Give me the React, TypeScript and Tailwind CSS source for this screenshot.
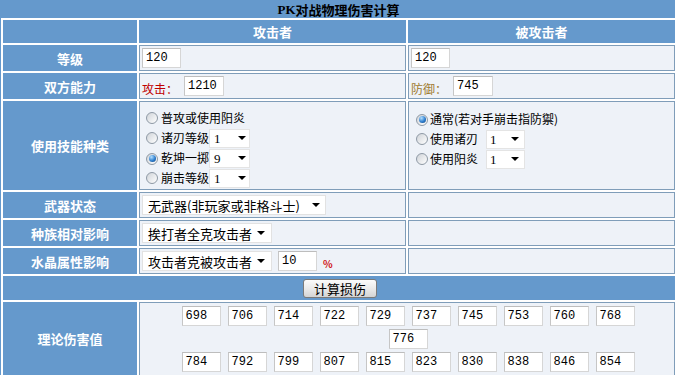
import React from "react";

const cjk = "font-['Noto_Sans_CJK_SC',sans-serif]";
const mono = "font-['Liberation_Mono',monospace]";

function Radio({ checked }: { checked?: boolean }) {
  return (
    <span className="inline-flex w-[12px] h-[12px] rounded-full border border-[#8e99a5] bg-[linear-gradient(135deg,#cfd3d8,#ffffff)] items-center justify-center shrink-0">
      {checked && (
        <span className="w-[7px] h-[7px] rounded-full bg-[radial-gradient(circle_at_35%_30%,#b4e0ff,#2f7fcf_55%,#0c3e78)]" />
      )}
    </span>
  );
}

function Arrow() {
  return (
    <span className="w-0 h-0 border-l-[4px] border-r-[4px] border-t-[4px] border-l-transparent border-r-transparent border-t-black" />
  );
}

function Box({ v, cls = "" }: { v: string; cls?: string }) {
  return (
    <div
      className={
        "h-[20px] bg-white border border-[#d6d6d6] border-t-[#bdbdbd] border-l-[#c6c6c6] pl-[3px] flex items-center text-[12px] text-black shrink-0 " +
        mono +
        " " +
        cls
      }
    >
      {v}
    </div>
  );
}

function Label({ children }: { children?: React.ReactNode }) {
  return (
    <div className="bg-[#6599cc] flex items-center justify-center text-white font-bold text-[13px]">
      {children}
    </div>
  );
}

function Cell({ children, cls = "" }: { children?: React.ReactNode; cls?: string }) {
  return (
    <div className={"bg-[#eef2f8] border border-[#7f9db9] px-[2px] flex items-center " + cls}>
      {children}
    </div>
  );
}

function SmallSel({ v, right }: { v: string; right?: boolean }) {
  return (
    <div
      className={
        (right ? "ml-[8px] w-[39px] pl-[3px] pr-[5px] " : "w-[41px] pl-[4px] pr-[3px] ") +
        "h-[19px] bg-white border border-[#e4e4e4] flex items-center justify-between text-[13px] text-black font-['Liberation_Serif',serif]"
      }
    >
      <span>{v}</span>
      <Arrow />
    </div>
  );
}

const line1 = ["698", "706", "714", "722", "729", "737", "745", "753", "760", "768"];
const line3 = ["784", "792", "799", "807", "815", "823", "830", "838", "846", "854"];

export default function App() {
  return (
    <div className={"w-[675px] h-[375px] overflow-hidden bg-[#6599cc] text-[12px] leading-none " + cjk}>
      <div className="h-[18px] flex items-center justify-center font-bold text-[13px] text-black pl-[2px]">
        <span className="font-['Liberation_Serif',serif]">PK</span>对战物理伤害计算
      </div>
      <div className="ml-[1px] w-[676px] bg-white p-[2px] grid grid-cols-[134px_267px_267px] gap-[2px] grid-rows-[23px_26px_26px_89px_26px_26px_26px_24px_80px]">
        {/* header */}
        <Label />
        <Label>攻击者</Label>
        <Label>被攻击者</Label>

        {/* 等级 */}
        <Label>等级</Label>
        <Cell>
          <Box v="120" cls="w-[39px]" />
        </Cell>
        <Cell>
          <Box v="120" cls="w-[39px]" />
        </Cell>

        {/* 双方能力 */}
        <Label>双方能力</Label>
        <Cell>
          <span className="text-[#c00000] text-[12px] mt-[6px]">攻击：</span>
          <Box v="1210" cls="w-[40px] ml-[6px]" />
        </Cell>
        <Cell>
          <span className="text-[#9e7b2f] text-[12px] mt-[6px]">防御：</span>
          <Box v="745" cls="w-[40px] ml-[6px]" />
        </Cell>

        {/* 使用技能种类 */}
        <Label>使用技能种类</Label>
        <div className="bg-[#eef2f8] border border-[#7f9db9] flex flex-col pt-[6px]">
          <div className="h-[20px] flex items-center">
            <span className="ml-[6px]">
              <Radio />
            </span>
            <span className="ml-[3px] text-black">普攻或使用阳炎</span>
          </div>
          <div className="h-[20px] flex items-center">
            <span className="ml-[6px]">
              <Radio />
            </span>
            <span className="ml-[3px] text-black">诸刃等级</span>
            <SmallSel v="1" />
          </div>
          <div className="h-[20px] flex items-center">
            <span className="ml-[6px]">
              <Radio checked />
            </span>
            <span className="ml-[3px] text-black">乾坤一掷</span>
            <SmallSel v="9" />
          </div>
          <div className="h-[20px] flex items-center">
            <span className="ml-[6px]">
              <Radio />
            </span>
            <span className="ml-[3px] text-black">崩击等级</span>
            <SmallSel v="1" />
          </div>
        </div>
        <div className="bg-[#eef2f8] border border-[#7f9db9] flex flex-col pt-[7px]">
          <div className="h-[20px] flex items-center">
            <span className="ml-[7px]">
              <Radio checked />
            </span>
            <span className="ml-[2px] text-black">通常(若对手崩击指防禦)</span>
          </div>
          <div className="h-[20px] flex items-center">
            <span className="ml-[7px]">
              <Radio />
            </span>
            <span className="ml-[2px] text-black">使用诸刃</span>
            <SmallSel v="1" right />
          </div>
          <div className="h-[20px] flex items-center">
            <span className="ml-[7px]">
              <Radio />
            </span>
            <span className="ml-[2px] text-black">使用阳炎</span>
            <SmallSel v="1" right />
          </div>
        </div>

        {/* 武器状态 */}
        <Label>武器状态</Label>
        <Cell>
          <div className="w-[184px] h-[20px] bg-white border border-[#e2e2e2] flex items-center justify-between pl-[5px] pr-[5px] text-[13px] text-black">
            <span>无武器(非玩家或非格斗士)</span>
            <Arrow />
          </div>
        </Cell>
        <Cell />

        {/* 种族相对影响 */}
        <Label>种族相对影响</Label>
        <Cell>
          <div className="w-[130px] h-[20px] bg-white border border-[#e2e2e2] flex items-center justify-between pl-[5px] pr-[6px] text-[13px] text-black">
            <span>挨打者全克攻击者</span>
            <Arrow />
          </div>
        </Cell>
        <Cell />

        {/* 水晶属性影响 */}
        <Label>水晶属性影响</Label>
        <Cell>
          <div className="w-[130px] h-[20px] bg-white border border-[#e2e2e2] flex items-center justify-between pl-[5px] pr-[6px] text-[13px] text-black">
            <span>攻击者克被攻击者</span>
            <Arrow />
          </div>
          <Box v="10" cls="w-[39px] ml-[6px]" />
          <span className="ml-[6px] mt-[6px] text-[#d01010] text-[10px] font-bold">%</span>
        </Cell>
        <Cell />

        {/* button row */}
        <div className="col-span-3 bg-[#6599cc] flex items-center justify-center">
          <div className="w-[74px] h-[19px] rounded-[3px] border border-[#7a7a7a] bg-[linear-gradient(#fbfbfb,#e6e6e6_60%,#d4d4d4)] flex items-center justify-center text-[13px] text-black ml-[2px]">
            计算损伤
          </div>
        </div>

        {/* 理论伤害值 */}
        <div className="bg-[#6599cc] flex items-start justify-center pt-[30px] text-white font-bold text-[13px]">
          理论伤害值
        </div>
        <div className="col-span-2 bg-[#eef2f8] border border-[#7f9db9] flex flex-col items-center pt-[3px] gap-[3px] pl-[2px]">
          <div className="flex gap-[7px]">
            {line1.map((v) => (
              <Box key={v} v={v} cls="w-[39px]" />
            ))}
          </div>
          <div className="flex gap-[7px]">
            <Box v="776" cls="w-[39px]" />
          </div>
          <div className="flex gap-[7px]">
            {line3.map((v) => (
              <Box key={v} v={v} cls="w-[39px]" />
            ))}
          </div>
        </div>
      </div>
    </div>
  );
}
